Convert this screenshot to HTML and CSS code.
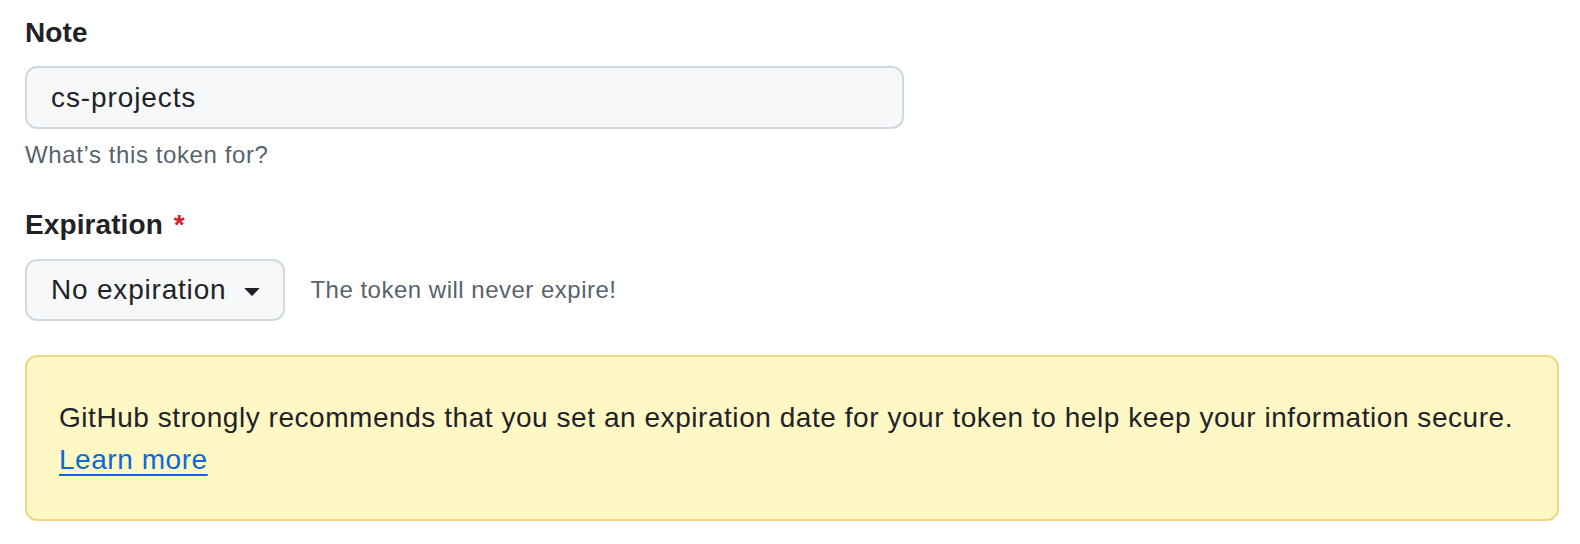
FILE: index.html
```html
<!DOCTYPE html>
<html lang="en">
<head>
<meta charset="utf-8">
<title>New personal access token</title>
<link rel="stylesheet" href="styles.css">
</head>
<body>
<div class="page">
  <div class="form-group">
    <label class="label" for="note">Note</label>
    <input id="note" class="input" type="text" value="cs-projects">
    <p class="note">What’s this token for?</p>
  </div>
  <div class="form-group expiration">
    <div class="label">Expiration <span class="req">*</span></div>
    <div class="select-row">
      <button class="select" type="button">
        <span class="select-text">No expiration</span>
        <svg class="caret" viewBox="0 0 16 16" width="32" height="32" aria-hidden="true"><path d="m4.427 7.427 3.396 3.396a.25.25 0 0 0 .354 0l3.396-3.396A.25.25 0 0 0 11.396 7H4.604a.25.25 0 0 0-.177.427Z"/></svg>
      </button>
      <span class="select-note">The token will never expire!</span>
    </div>
  </div>
  <div class="flash">
    GitHub strongly recommends that you set an expiration date for your token to help keep your information secure.<br>
    <a href="#" class="link">Learn more</a>
  </div>
</div>
</body>
</html>
```

FILE: styles.css
```css
html, body {
  margin: 0;
  padding: 0;
  background: #ffffff;
}
body {
  font-family: "Liberation Sans", Arial, sans-serif;
  color: #1f2328;
}
.page {
  padding: 12px 21px 0 25px;
}
.form-group {
  display: flex;
  flex-direction: column;
  align-items: flex-start;
}
.label {
  font-size: 28px;
  line-height: 42px;
  font-weight: 700;
  letter-spacing: 0.1px;
  color: #1f2328;
}
.req {
  color: #d1242f;
  margin-left: 3px;
}
.input {
  box-sizing: border-box;
  margin: 12px 0 0 0;
  width: 879px;
  height: 63px;
  padding: 0 24px;
  border: 2px solid #d1d9e0;
  border-radius: 12px;
  background: #f6f8fa;
  font-family: inherit;
  font-size: 28px;
  letter-spacing: 0.9px;
  color: #1f2328;
  outline: none;
}
.note {
  margin: 8px 0 0 0;
  font-size: 24px;
  line-height: 36px;
  letter-spacing: 0.6px;
  color: #59636e;
}
.expiration {
  margin-top: 31px;
}
.select-row {
  margin-top: 13px;
  display: flex;
  align-items: center;
  gap: 25px;
}
.select {
  box-sizing: border-box;
  display: flex;
  align-items: center;
  gap: 10px;
  height: 62px;
  padding: 0 15px 0 24px;
  border: 2px solid #d1d9e0;
  border-radius: 12px;
  background: #f6f8fa;
  font-family: inherit;
  font-size: 28px;
  letter-spacing: 0.8px;
  color: #1f2328;
  cursor: pointer;
}
.caret {
  fill: #1f2328;
  flex: none;
}
.select-note {
  font-size: 24px;
  line-height: 36px;
  letter-spacing: 0.5px;
  color: #59636e;
}
.flash {
  margin-top: 34px;
  padding: 40px 32px 38px;
  border: 2px solid #eed888;
  border-radius: 12px;
  background: #fff8c5;
  font-size: 28px;
  line-height: 42px;
  letter-spacing: 0.55px;
  color: #1f2328;
}
.link {
  color: #0969da;
  text-decoration: underline;
  text-decoration-thickness: 2px;
  text-underline-offset: 5px;
}
```
